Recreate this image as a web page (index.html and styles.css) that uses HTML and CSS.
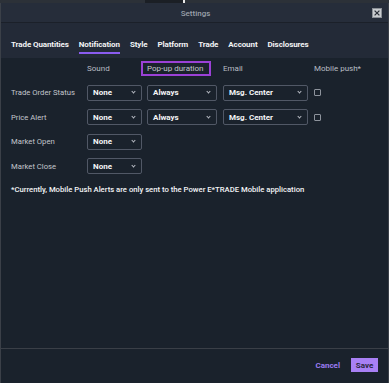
FILE: index.html
```html
<!DOCTYPE html>
<html lang="en">
<head>
<meta charset="utf-8">
<title>Settings</title>
<link rel="stylesheet" href="styles.css">
</head>
<body>
<div class="topstrip"><span class="seg"></span><span class="tick"></span></div>
<div class="dialog">
  <header class="titlebar">
    <span class="title">Settings</span>
    <button class="close" aria-label="Close">
      <svg viewBox="0 0 10 10" width="8" height="8"><path d="M2 2 L8 8 M8 2 L2 8" stroke="#2a2f38" stroke-width="1.6" fill="none"/></svg>
    </button>
  </header>
  <nav class="tabs">
    <span class="tab">Trade Quantities</span>
    <span class="tab active">Notification</span>
    <span class="tab">Style</span>
    <span class="tab">Platform</span>
    <span class="tab">Trade</span>
    <span class="tab">Account</span>
    <span class="tab">Disclosures</span>
  </nav>
  <main class="content">
    <div class="grid">
      <span></span>
      <span class="colhead">Sound</span>
      <span class="colhead"><span class="highlight">Pop-up duration</span></span>
      <span class="colhead">Email</span>
      <span class="colhead">Mobile push*</span>

      <span class="label">Trade Order Status</span>
      <span class="select w1">None<i class="chev"></i></span>
      <span class="select w2">Always<i class="chev"></i></span>
      <span class="select w3">Msg. Center<i class="chev"></i></span>
      <span class="check"></span>

      <span class="label">Price Alert</span>
      <span class="select w1">None<i class="chev"></i></span>
      <span class="select w2">Always<i class="chev"></i></span>
      <span class="select w3">Msg. Center<i class="chev"></i></span>
      <span class="check"></span>

      <span class="label">Market Open</span>
      <span class="select w1">None<i class="chev"></i></span>
      <span></span><span></span><span></span>

      <span class="label">Market Close</span>
      <span class="select w1">None<i class="chev"></i></span>
      <span></span><span></span><span></span>
    </div>
    <p class="note">*Currently, Mobile Push Alerts are only sent to the Power E*TRADE Mobile application</p>
  </main>
  <footer class="footer">
    <span class="cancel">Cancel</span>
    <span class="save">Save</span>
  </footer>
</div>
</body>
</html>
```

FILE: styles.css
```css
* { box-sizing: border-box; }
html, body {
  margin: 0;
  padding: 0;
  width: 389px;
  height: 383px;
  overflow: hidden;
  background: #1a212b;
  font-family: Roboto, "Liberation Sans", Arial, sans-serif;
}
.topstrip {
  height: 3px;
  background: #2c3138;
  display: flex;
  align-items: stretch;
}
.topstrip .seg {
  width: 38px;
  margin-left: 145px;
  background: #1b1f25;
}
.topstrip .tick {
  width: 2px;
  background: #e8e8e8;
}
.dialog {
  height: 380px;
  display: flex;
  flex-direction: column;
  border-left: 1px solid #3b4048;
  border-right: 1px solid #3b4048;
}
.titlebar {
  height: 20px;
  background: #262d3a;
  border-bottom: 1px solid #1b2029;
  display: flex;
  align-items: center;
  justify-content: center;
  position: relative;
}
.title {
  color: #9aa0a9;
  font-size: 8px;
  font-weight: 500;
  margin-left: 2px;
  margin-top: 1px;
}
.close {
  position: absolute;
  right: 6px;
  top: 5px;
  width: 10px;
  height: 10px;
  padding: 0;
  border: 1px solid #8b9096;
  background: #c9cccf;
  display: flex;
  align-items: center;
  justify-content: center;
}
.tabs {
  height: 35px;
  background: #232a37;
  display: flex;
  align-items: flex-end;
  gap: 10px;
  padding: 0 0 4px 10px;
}
.tab {
  color: #f2f3f5;
  font-size: 8px;
  font-weight: 700;
  letter-spacing: -0.1px;
  padding-bottom: 2px;
  border-bottom: 2px solid transparent;
  line-height: 10px;
}
.tab.active {
  border-bottom-color: #8b5cf0;
}
.content {
  flex: 1;
  background: #1a222c;
  padding: 2px 0 0 10px;
}
.grid {
  display: grid;
  grid-template-columns: 76px 60px 76px 91px auto;
  grid-auto-rows: 16px;
  row-gap: 8.5px;
  align-items: center;
}
.grid > :first-child { height: 15px; }
.colhead {
  color: #b9bdc4;
  font-size: 8px;
  display: flex;
  align-items: center;
}
.highlight {
  margin-left: -6px;
  border: 2px solid #9b41d6;
  padding: 0 5px 0 4px;
  height: 15px;
  line-height: 11px;
  color: #c3c7cd;
}
.label {
  color: #c3c6cc;
  font-size: 7.7px;
}
.select {
  height: 16px;
  border: 1px solid #515866;
  border-radius: 2px;
  color: #f4f5f7;
  font-size: 8px;
  font-weight: 700;
  padding: 0 5px;
  display: flex;
  align-items: center;
  justify-content: space-between;
}
.w1 { width: 55px; }
.w2 { width: 70px; }
.w3 { width: 85px; }
.chev {
  width: 3px;
  height: 3px;
  border-right: 1px solid #b7bcc4;
  border-bottom: 1px solid #b7bcc4;
  transform: rotate(45deg);
  margin: -2px 1px 0 0;
}
.check {
  width: 7px;
  height: 7px;
  border: 1px solid #8d939c;
  border-radius: 1px;
}
.note {
  margin: 11px 0 0 0;
  color: #f4f5f7;
  font-size: 7.7px;
  font-weight: 500;
}
.footer {
  height: 35px;
  border-top: 1px solid #3a3f47;
  background: #1a222c;
  display: flex;
  align-items: center;
  justify-content: flex-end;
  gap: 11px;
  padding: 0 10px 2px 0;
}
.cancel {
  color: #9a7cf2;
  font-size: 8px;
  font-weight: 700;
}
.save {
  background: #a880f4;
  color: #2a2740;
  font-size: 8px;
  font-weight: 700;
  width: 27px;
  height: 14px;
  display: flex;
  align-items: center;
  justify-content: center;
}
```
